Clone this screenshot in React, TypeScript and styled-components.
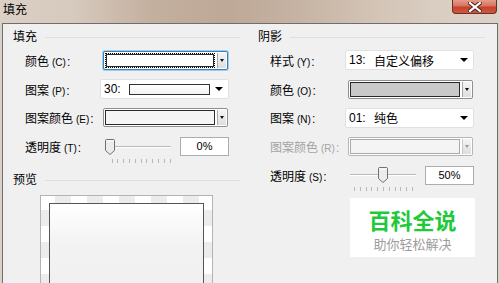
import React from 'react';
import styled, { createGlobalStyle } from 'styled-components';

const GlobalStyle = createGlobalStyle`
  html, body {
    margin: 0;
    padding: 0;
  }
  body {
    font-family: "Liberation Sans", "Noto Sans CJK SC", sans-serif;
    font-size: 12px;
    color: #000;
  }
`;

interface SliderProps {
  width: number;
  value: number;
  offset: number;
}

const Slider: React.FC<SliderProps> = ({ width, value, offset }) => {
  const start = 5;
  const end = width - 5;
  const cx = start + value * (end - start);
  const mid = (start + end) / 2;
  const ticks = Array.from({ length: 11 }, (_, i) => mid - 29 + i * 5.8);
  return (
    <StyledSlider width={width} height={16} $offset={offset}>
      <line x1={start} y1={7.5} x2={end} y2={7.5} stroke="#b9b9b9" />
      <line x1={start} y1={8.5} x2={end} y2={8.5} stroke="#ffffff" />
      <path
        d={`M${cx - 4.5} 1.5 Q${cx - 4.5} 0.5 ${cx - 3.5} 0.5 H${cx + 3.5} Q${cx + 4.5} 0.5 ${cx + 4.5} 1.5 V11.5 L${cx} 15.5 L${cx - 4.5} 11.5 Z`}
        fill="#ececec"
        stroke="#707070"
      />
      <path d={`M${cx - 3.5} 2 H${cx + 3.5}`} stroke="#fff" />
      {ticks.map((x) => (
        <line key={x} x1={Math.round(x) + 0.5} y1={20} x2={Math.round(x) + 0.5} y2={24} stroke="#b8b8b8" />
      ))}
    </StyledSlider>
  );
};

const CloseIcon = () => (
  <svg width="14" height="10" viewBox="0 0 14 10">
    <path d="M2 1 L12 9 M12 1 L2 9" stroke="#4a1d14" strokeWidth="4" strokeLinecap="square" />
    <path d="M2 1 L12 9 M12 1 L2 9" stroke="#ffffff" strokeWidth="2.2" strokeLinecap="square" />
  </svg>
);

const App: React.FC = () => {
  return (
    <>
      <GlobalStyle />
      <StyledWindow>
        <StyledTitleBar>
          <StyledTitle>填充</StyledTitle>
          <StyledClose>
            <CloseIcon />
          </StyledClose>
        </StyledTitleBar>
        <StyledBody>
          <StyledColumn $padLeft={10} $padRight={10}>
            <StyledHeader>
              填充
              <StyledRule />
            </StyledHeader>
            <StyledRows>
              <StyledRow>
                <StyledLabel>
                  颜色<StyledKey>(C)</StyledKey>:
                </StyledLabel>
                <StyledSwatchCombo $focused>
                  <StyledFocusRect>
                    <StyledSwatch $fill="#ffffff" />
                  </StyledFocusRect>
                  <StyledDropButton>
                    <StyledSmallArrow />
                  </StyledDropButton>
                </StyledSwatchCombo>
              </StyledRow>
              <StyledRow>
                <StyledLabel>
                  图案<StyledKey>(P)</StyledKey>:
                </StyledLabel>
                <StyledListCombo>
                  <StyledPrefix>30:</StyledPrefix>
                  <StyledPatternBox />
                  <StyledArrow />
                </StyledListCombo>
              </StyledRow>
              <StyledRow>
                <StyledLabel>
                  图案颜色<StyledKey>(E)</StyledKey>:
                </StyledLabel>
                <StyledSwatchCombo>
                  <StyledSwatch $fill="#f5f5f5" />
                  <StyledDropButton>
                    <StyledSmallArrow />
                  </StyledDropButton>
                </StyledSwatchCombo>
              </StyledRow>
              <StyledRow>
                <StyledLabel>
                  透明度<StyledKey>(T)</StyledKey>:
                </StyledLabel>
                <Slider width={71} value={0} offset={5} />
                <StyledTextBox>0%</StyledTextBox>
              </StyledRow>
            </StyledRows>
            <StyledPreviewHeader>
              预览
              <StyledRule />
            </StyledPreviewHeader>
            <StyledPreviewFrame>
              <StyledPreviewShape />
            </StyledPreviewFrame>
          </StyledColumn>

          <StyledColumn $padLeft={8} $padRight={12}>
            <StyledHeader>
              阴影
              <StyledRule />
            </StyledHeader>
            <StyledRows>
              <StyledRow>
                <StyledLabel>
                  样式<StyledKey>(Y)</StyledKey>:
                </StyledLabel>
                <StyledListCombo>
                  <StyledPrefix>13:</StyledPrefix>
                  自定义偏移
                  <StyledArrow />
                </StyledListCombo>
              </StyledRow>
              <StyledRow>
                <StyledLabel>
                  颜色<StyledKey>(O)</StyledKey>:
                </StyledLabel>
                <StyledSwatchCombo>
                  <StyledSwatch $fill="#c9c9c9" />
                  <StyledDropButton>
                    <StyledSmallArrow />
                  </StyledDropButton>
                </StyledSwatchCombo>
              </StyledRow>
              <StyledRow>
                <StyledLabel>
                  图案<StyledKey>(N)</StyledKey>:
                </StyledLabel>
                <StyledListCombo>
                  <StyledPrefix>01:</StyledPrefix>
                  纯色
                  <StyledArrow />
                </StyledListCombo>
              </StyledRow>
              <StyledRow>
                <StyledLabel $disabled>
                  图案颜色<StyledKey>(R)</StyledKey>:
                </StyledLabel>
                <StyledSwatchCombo $disabled>
                  <StyledSwatch $fill="#f4f4f4" $disabled />
                  <StyledDropButton $disabled>
                    <StyledSmallArrow $disabled />
                  </StyledDropButton>
                </StyledSwatchCombo>
              </StyledRow>
              <StyledRow>
                <StyledLabel>
                  透明度<StyledKey>(S)</StyledKey>:
                </StyledLabel>
                <Slider width={76} value={0.5} offset={0} />
                <StyledTextBox>50%</StyledTextBox>
              </StyledRow>
            </StyledRows>
            <StyledLogo>
              <StyledLogoTitle>百科全说</StyledLogoTitle>
              <StyledLogoSub>助你轻松解决</StyledLogoSub>
            </StyledLogo>
          </StyledColumn>
        </StyledBody>
      </StyledWindow>
    </>
  );
};

const StyledWindow = styled.div`
  width: 500px;
  height: 283px;
  overflow: hidden;
  display: flex;
  flex-direction: column;
  background: linear-gradient(
    90deg,
    #dcd1c7 0%,
    #d6c9bd 15%,
    #c4b09f 30%,
    #bea897 45%,
    #c6b3a3 60%,
    #d3c4b6 75%,
    #dbcfc4 90%,
    #ddd2c8 100%
  );
`;

const StyledTitleBar = styled.div`
  height: 23px;
  flex: none;
  display: flex;
  justify-content: space-between;
  align-items: flex-start;
`;

const StyledTitle = styled.div`
  padding: 3px 0 0 3px;
  font-size: 12px;
  line-height: 14px;
  color: #000;
`;

const StyledClose = styled.div`
  width: 45px;
  height: 14px;
  margin-right: 3px;
  box-sizing: border-box;
  border: 1px solid #6a3024;
  border-top: none;
  border-radius: 0 0 4px 4px;
  background: linear-gradient(180deg, #e59c8c 0%, #d9735e 45%, #c4432b 55%, #d0583f 100%);
  display: flex;
  justify-content: center;
  align-items: center;
`;

const StyledBody = styled.div`
  flex: 1;
  margin: 0 2px;
  border: 1px solid #6e6e6e;
  border-bottom: none;
  background: #f0f0f0;
  display: grid;
  grid-template-columns: 247px 247px;
  overflow: hidden;
`;

const StyledColumn = styled.div<{ $padLeft: number; $padRight: number }>`
  padding: 6px ${(p) => p.$padRight}px 0 ${(p) => p.$padLeft}px;
  display: flex;
  flex-direction: column;
`;

const StyledHeader = styled.div`
  height: 14px;
  line-height: 14px;
  font-size: 12px;
  display: flex;
  align-items: center;
`;

const StyledPreviewHeader = styled(StyledHeader)`
  margin-top: 12px;
`;

const StyledRule = styled.div`
  flex: 1;
  height: 1px;
  margin-left: 8px;
  background: #d9e1e7;
`;

const StyledRows = styled.div`
  margin-top: 2px;
  display: grid;
  grid-auto-rows: 28.75px;
`;

const StyledRow = styled.div`
  display: flex;
  align-items: center;
  padding-left: 12px;
`;

const StyledLabel = styled.div<{ $disabled?: boolean }>`
  width: 75px;
  flex: none;
  font-size: 12px;
  white-space: nowrap;
  color: ${(p) => (p.$disabled ? '#a3a3a3' : '#000')};
`;

const StyledKey = styled.span`
  font-size: 10px;
  margin-left: 3px;
  margin-right: 1px;
`;

const StyledSwatchCombo = styled.div<{ $focused?: boolean; $disabled?: boolean }>`
  margin-left: 3px;
  width: 125px;
  height: 19px;
  box-sizing: border-box;
  padding: 1px;
  display: flex;
  align-items: stretch;
  background: #fff;
  border: 1px solid ${(p) => (p.$focused ? '#3c7fb1' : p.$disabled ? '#b6b6b6' : '#8e8f8f')};
  border-radius: 2px;
  box-shadow: ${(p) => (p.$focused ? '0 0 0 1px #9ccdf0' : 'none')};
`;

const StyledFocusRect = styled.div`
  flex: 1;
  display: flex;
  border: 1px dotted #000;
`;

const StyledSwatch = styled.div<{ $fill: string; $disabled?: boolean }>`
  flex: 1;
  background: ${(p) => p.$fill};
  border: 1px solid ${(p) => (p.$disabled ? '#a9a9a9' : '#2a2a2a')};
`;

const StyledDropButton = styled.div<{ $disabled?: boolean }>`
  width: 8px;
  margin-left: 2px;
  border-left: 1px solid ${(p) => (p.$disabled ? '#c8c8c8' : '#a8a8a8')};
  background: linear-gradient(180deg, #f4f4f4, #dedede);
  display: flex;
  justify-content: center;
  align-items: center;
`;

const StyledSmallArrow = styled.span<{ $disabled?: boolean }>`
  width: 0;
  height: 0;
  border-left: 2.5px solid transparent;
  border-right: 2.5px solid transparent;
  border-top: 3px solid ${(p) => (p.$disabled ? '#9a9a9a' : '#111')};
`;

const StyledListCombo = styled.div`
  width: 129px;
  height: 20px;
  box-sizing: border-box;
  padding: 0 5px 0 3px;
  display: flex;
  align-items: center;
  background: #fff;
  border: 1px solid #e1e1e1;
  border-radius: 2px;
  font-size: 12px;
  white-space: nowrap;
`;

const StyledPrefix = styled.span`
  width: 25px;
  flex: none;
`;

const StyledPatternBox = styled.div`
  width: 79px;
  height: 9px;
  border: 1px solid #333;
  background: linear-gradient(180deg, #ffffff, #f1f1f1);
`;

const StyledArrow = styled.span`
  margin-left: auto;
  width: 0;
  height: 0;
  border-left: 4px solid transparent;
  border-right: 4px solid transparent;
  border-top: 4px solid #000;
`;

const StyledSlider = styled.svg<{ $offset: number }>`
  flex: none;
  overflow: visible;
  margin-left: ${(p) => p.$offset}px;
`;

const StyledTextBox = styled.div`
  margin-left: 4px;
  width: 49px;
  height: 19px;
  box-sizing: border-box;
  border: 1px solid #acadb3;
  background: #fff;
  font-size: 11px;
  line-height: 17px;
  text-align: center;
`;

const StyledPreviewFrame = styled.div`
  margin: 8px 0 0 27px;
  width: 173px;
  height: 110px;
  flex: none;
  box-sizing: border-box;
  padding: 7px 8px 0;
  border: 1px solid #b3b3b3;
  background: repeating-conic-gradient(#ececec 0 25%, #ffffff 0 50%) -2px -2px / 32px 32px;
  display: flex;
`;

const StyledPreviewShape = styled.div`
  flex: 1;
  border: 1px solid #555;
  background: linear-gradient(180deg, #ffffff 0%, #f3f3f3 40%, #efefef 100%);
`;

const StyledLogo = styled.div`
  margin: 8px 0 0 92px;
  width: 125px;
  height: 59px;
  box-sizing: border-box;
  padding-top: 7px;
  background: #fff;
  display: flex;
  flex-direction: column;
  align-items: center;
`;

const StyledLogoTitle = styled.div`
  font-family: "Noto Sans CJK SC", sans-serif;
  font-size: 22px;
  line-height: 28px;
  font-weight: 700;
  color: #1fc93a;
`;

const StyledLogoSub = styled.div`
  margin-top: 2px;
  font-family: "Noto Sans CJK SC", sans-serif;
  font-size: 13px;
  line-height: 18px;
  color: #9c9c9c;
`;

export default App;
